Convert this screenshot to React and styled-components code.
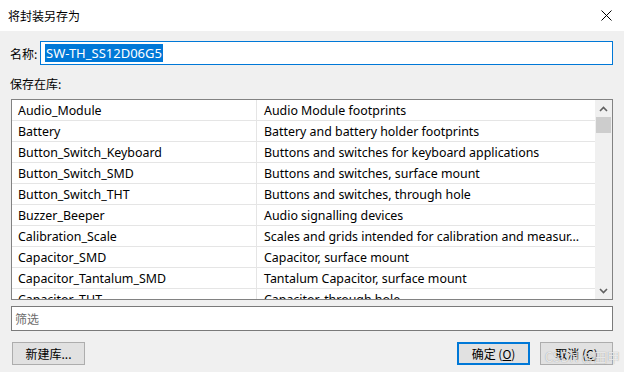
import React from "react";
import styled, { createGlobalStyle } from "styled-components";

const GlobalStyle = createGlobalStyle`
  html, body {
    margin: 0;
    padding: 0;
    background: #f0f0f0;
  }
  * {
    box-sizing: border-box;
  }
`;

const Window = styled.div`
  position: relative;
  width: 624px;
  height: 372px;
  display: flex;
  flex-direction: column;
  background: #f0f0f0;
  font-family: "Noto Sans", "Noto Sans CJK SC", sans-serif;
  font-size: 12px;
  color: #000;
  overflow: hidden;
`;

const TitleBar = styled.div`
  height: 31px;
  flex: none;
  background: #fff;
  display: flex;
  align-items: center;
  justify-content: space-between;
  padding: 0 12px 1px 8px;
`;

const Title = styled.span`
  font-family: "Noto Sans CJK SC", sans-serif;
  font-size: 12px;
`;

const Body = styled.div`
  flex: 1;
  display: flex;
  flex-direction: column;
  padding: 10px 11px 0 11px;
`;

const NameRow = styled.div`
  display: flex;
  align-items: center;
  height: 24px;
`;

const Label = styled.span`
  font-family: "Noto Sans CJK SC", sans-serif;
  margin-left: -1px;
  width: 30px;
  flex: none;
`;

const NameInput = styled.div`
  flex: 1;
  height: 24px;
  border: 1px solid #0078d7;
  background: #fff;
  display: flex;
  align-items: center;
  padding-left: 4px;
`;

const Selected = styled.span`
  background: #0078d7;
  color: #fff;
  font-size: 13px;
  line-height: 18px;
  padding: 0 1px;
`;

const SectionLabel = styled.div`
  font-family: "Noto Sans CJK SC", sans-serif;
  margin: 11px 0 0 -1px;
  height: 23px;
  line-height: 16px;
`;

const ListBox = styled.div`
  height: 201px;
  border: 1px solid #828282;
  background: #fff;
  display: flex;
`;

const Rows = styled.div`
  flex: 1;
  overflow: hidden;
`;

const Row = styled.div`
  display: grid;
  grid-template-columns: 244px 1fr;
  height: 21px;
  border-bottom: 1px solid #e5e5e5;
`;

const Cell = styled.div`
  padding: 1px 0 0 ${(p) => (p.$second ? 7 : 6)}px;
  font-size: 12.4px;
  line-height: 19px;
  white-space: nowrap;
  overflow: hidden;
  border-left: ${(p) => (p.$second ? "1px solid #e5e5e5" : "none")};
`;

const ScrollBar = styled.div`
  width: 17px;
  flex: none;
  background: #f0f0f0;
  display: flex;
  flex-direction: column;
`;

const Arrow = styled.div`
  height: 17px;
  display: flex;
  align-items: center;
  justify-content: center;
`;

const Thumb = styled.div`
  height: 16px;
  margin: 0 1px;
  background: #cdcdcd;
`;

const Track = styled.div`
  flex: 1;
`;

const Filter = styled.div`
  margin-top: 6px;
  height: 25px;
  border: 1px solid #7a7a7a;
  background: #fff;
  display: flex;
  align-items: center;
  padding-left: 3px;
  font-family: "Noto Sans CJK SC", sans-serif;
  color: #6d6d6d;
`;

const ButtonRow = styled.div`
  margin-top: 11px;
  display: flex;
  align-items: center;
  padding-left: 1px;
`;

const Button = styled.div`
  width: 73px;
  height: 23px;
  background: #e1e1e1;
  border: ${(p) => (p.$primary ? "2px solid #0078d7" : "1px solid #adadad")};
  display: flex;
  align-items: center;
  justify-content: center;
  font-family: "Noto Sans CJK SC", sans-serif;
  font-size: 12px;
  margin-left: ${(p) => p.$gap || 0}px;
`;

const Key = styled.span`
  text-decoration: underline;
`;

const Watermark = styled.div`
  position: absolute;
  right: 4px;
  bottom: 6px;
  font-family: "Noto Sans CJK SC", sans-serif;
  font-size: 13px;
  color: rgba(255, 255, 255, 0.75);
  text-shadow: 0 0 1px rgba(90, 90, 90, 0.6);
  pointer-events: none;
`;

const libs = [
  ["Audio_Module", "Audio Module footprints"],
  ["Battery", "Battery and battery holder footprints"],
  ["Button_Switch_Keyboard", "Buttons and switches for keyboard applications"],
  ["Button_Switch_SMD", "Buttons and switches, surface mount"],
  ["Button_Switch_THT", "Buttons and switches, through hole"],
  ["Buzzer_Beeper", "Audio signalling devices"],
  ["Calibration_Scale", "Scales and grids intended for calibration and measur..."],
  ["Capacitor_SMD", "Capacitor, surface mount"],
  ["Capacitor_Tantalum_SMD", "Tantalum Capacitor, surface mount"],
  ["Capacitor_THT", "Capacitor, through hole"],
];

const Chevron = ({ up }) => (
  <svg width="9" height="6" viewBox="0 0 9 6">
    <path
      d={up ? "M1 5 L4.5 1.5 L8 5" : "M1 1 L4.5 4.5 L8 1"}
      fill="none"
      stroke="#606060"
      strokeWidth="1.6"
    />
  </svg>
);

export default function App() {
  return (
    <>
      <GlobalStyle />
      <Window>
        <TitleBar>
          <Title>将封装另存为</Title>
          <svg width="11" height="11" viewBox="0 0 11 11">
            <path d="M0.5 0.5 L10.5 10.5 M10.5 0.5 L0.5 10.5" stroke="#000" strokeWidth="1" />
          </svg>
        </TitleBar>
        <Body>
          <NameRow>
            <Label>名称:</Label>
            <NameInput>
              <Selected>SW-TH_SS12D06G5</Selected>
            </NameInput>
          </NameRow>
          <SectionLabel>保存在库:</SectionLabel>
          <ListBox>
            <Rows>
              {libs.map(([name, desc]) => (
                <Row key={name}>
                  <Cell>{name}</Cell>
                  <Cell $second>{desc}</Cell>
                </Row>
              ))}
            </Rows>
            <ScrollBar>
              <Arrow>
                <Chevron up />
              </Arrow>
              <Thumb />
              <Track />
              <Arrow>
                <Chevron />
              </Arrow>
            </ScrollBar>
          </ListBox>
          <Filter>筛选</Filter>
          <ButtonRow>
            <Button>新建库...</Button>
            <Button $primary $gap={372}>
              确定 (<Key>O</Key>)
            </Button>
            <Button $gap={10}>
              取消 (<Key>C</Key>)
            </Button>
          </ButtonRow>
        </Body>
        <Watermark>CSDN @田甲</Watermark>
      </Window>
    </>
  );
}
